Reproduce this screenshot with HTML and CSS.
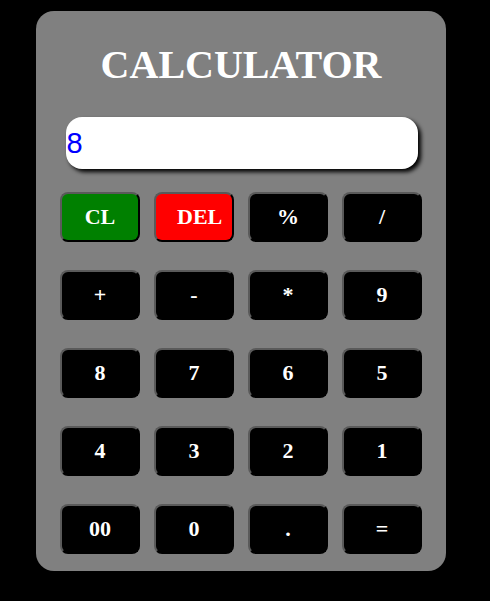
FILE: index.html
```html
<!DOCTYPE html>
<html>
<head>
<meta charset="utf-8">
<link rel="stylesheet" href="styles.css">
</head>
<body>
<div class="calculator">
  <h1 class="title">CALCULATOR</h1>
  <input class="display" type="text" value="8">
  <div class="keys">
    <button class="key key-clear">CL</button>
    <button class="key key-del">DEL</button>
    <button class="key">%</button>
    <button class="key">/</button>
    <button class="key">+</button>
    <button class="key">-</button>
    <button class="key">*</button>
    <button class="key">9</button>
    <button class="key">8</button>
    <button class="key">7</button>
    <button class="key">6</button>
    <button class="key">5</button>
    <button class="key">4</button>
    <button class="key">3</button>
    <button class="key">2</button>
    <button class="key">1</button>
    <button class="key">00</button>
    <button class="key">0</button>
    <button class="key">.</button>
    <button class="key">=</button>
  </div>
</div>
</body>
</html>
```

FILE: styles.css
```css
html, body {
  margin: 0;
  padding: 0;
  background: #000;
}

body {
  width: 490px;
  height: 601px;
  overflow: hidden;
}

.calculator {
  box-sizing: border-box;
  width: 410px;
  height: 560px;
  margin: 11px 0 0 36px;
  padding: 31px 24px 17px;
  background: #808080;
  border-radius: 18px;
  display: flex;
  flex-direction: column;
  align-items: center;
}

.title {
  margin: 0;
  font-family: "Liberation Serif", "Times New Roman", serif;
  font-weight: bold;
  font-size: 40px;
  line-height: 46px;
  color: #fff;
  text-align: center;
}

.display {
  box-sizing: border-box;
  width: 352px;
  height: 52px;
  margin: 29px 0 0 1px;
  padding: 0 0 0 1px;
  border: none;
  border-radius: 16px;
  background: #fff;
  box-shadow: 3px 3px 4px #000;
  font-family: "Liberation Sans", Arial, sans-serif;
  font-size: 29px;
  color: #0000ff;
  outline: none;
}

.keys {
  margin-top: 23px;
  display: grid;
  grid-template-columns: repeat(4, 80px);
  grid-auto-rows: 50px;
  column-gap: 14px;
  row-gap: 28px;
}

.key {
  box-sizing: border-box;
  margin: 0;
  padding: 0 21px;
  border: 2px solid;
  border-color: #5a5a5a #000 #000 #5a5a5a;
  border-radius: 8px;
  background: #000;
  color: #fff;
  font-family: "Liberation Serif", "Times New Roman", serif;
  font-weight: bold;
  font-size: 22px;
  font-variant-numeric: oldstyle-nums;
  white-space: nowrap;
  text-align: center;
}

.key-clear {
  background: #008000;
}

.key-del {
  background: #ff0000;
}
```
